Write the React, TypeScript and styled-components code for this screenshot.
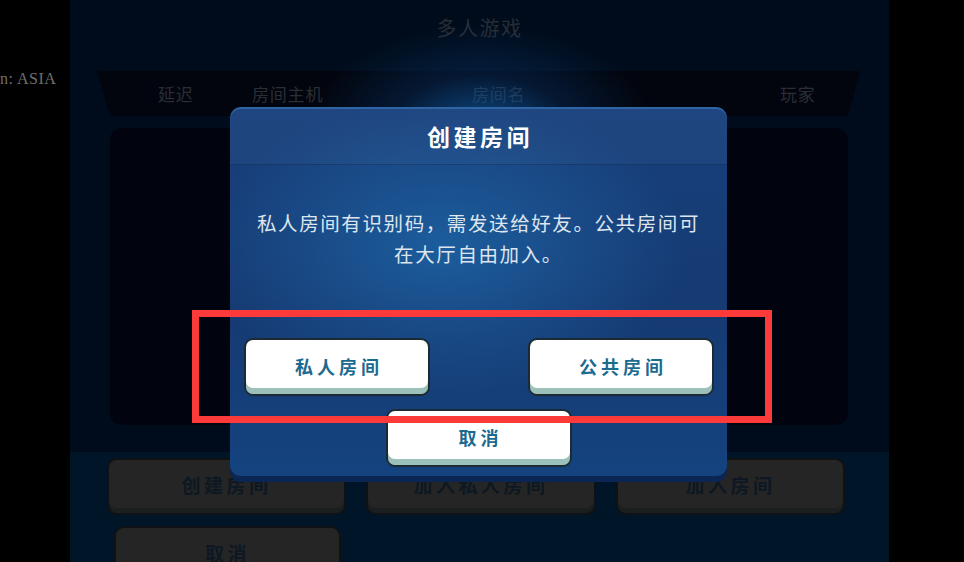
import styled, { createGlobalStyle } from "styled-components";

const GlobalStyle = createGlobalStyle`
  html, body {
    margin: 0;
    padding: 0;
    background: #000;
    overflow: hidden;
  }
  body {
    font-family: "Noto Sans CJK SC", "Noto Sans", sans-serif;
  }
`;

const cjk = `"Noto Sans CJK SC", "Noto Sans", sans-serif`;

const Screen = styled.div`
  position: relative;
  width: 964px;
  height: 562px;
  display: flex;
  background: #000;
  overflow: hidden;
`;

const Gutter = styled.div`
  width: 70px;
  flex: none;
  padding-top: 70px;
  overflow: hidden;
`;

const RegionLabel = styled.div`
  font-family: "Liberation Serif", serif;
  font-size: 16px;
  color: #6f6f6f;
  white-space: nowrap;
  letter-spacing: 0.5px;
`;

/* ---------- lobby panel (dimmed behind the popup) ---------- */

const Panel = styled.div`
  width: 819px;
  flex: none;
  display: flex;
  flex-direction: column;
  background: #000c1b;
  overflow: hidden;

  & > * {
    flex-shrink: 0;
  }
`;

const LobbyTitle = styled.div`
  height: 54px;
  display: flex;
  align-items: center;
  justify-content: center;
  font-family: ${cjk};
  font-size: 20px;
  letter-spacing: 1.5px;
  color: #272d36;
  margin-bottom: 17px;
`;

const HeaderBand = styled.div`
  height: 45px;
  margin: 0 29px 0 27px;
  background: #02050e;
  clip-path: polygon(0 0, 100% 0, calc(100% - 12px) 100%, 13px 100%);
  display: grid;
  grid-template-columns: 94px 220px 308px auto;
  align-items: center;
  padding-left: 61px;
  font-family: ${cjk};
  font-size: 17px;
  letter-spacing: 0.8px;
  color: #2a2e35;
`;

const ListArea = styled.div`
  height: 297px;
  margin: 12px 41px 0 40px;
  border-radius: 12px;
  background: #01040e;
`;

const Footer = styled.div`
  margin-top: 27px;
  flex: 1;
  background: #001527;
  padding-top: 6px;
  display: flex;
  flex-direction: column;
  gap: 11px;
`;

const FooterRow = styled.div<{ $indent: number }>`
  display: flex;
  gap: 20px;
  padding-left: ${(p) => p.$indent}px;
`;

const DimButton = styled.div<{ $w: number }>`
  width: ${(p) => p.$w}px;
  height: 57px;
  flex: none;
  box-sizing: border-box;
  border: 2px solid #0e1215;
  border-radius: 10px;
  background: #252525;
  box-shadow: inset 0 -5px 0 #1b1f1f;
  display: flex;
  align-items: center;
  justify-content: center;
  padding-bottom: 4px;
  font-family: ${cjk};
  font-weight: 700;
  font-size: 19px;
  letter-spacing: 3.5px;
  color: #0d1822;
`;

/* ---------- create-room popup ---------- */

const Glow = styled.div`
  position: absolute;
  left: 300px;
  top: 20px;
  width: 360px;
  height: 200px;
  background: radial-gradient(
    ellipse at 50% 55%,
    rgba(18, 100, 175, 0.75) 0%,
    rgba(10, 60, 120, 0.35) 35%,
    rgba(0, 20, 50, 0) 68%
  );
  pointer-events: none;
`;

const Dialog = styled.div`
  position: absolute;
  left: 230px;
  top: 107px;
  width: 497px;
  height: 369px;
  box-sizing: border-box;
  border-radius: 11px;
  background:
    radial-gradient(ellipse 240px 150px at 43% 38%, rgba(30, 104, 170, 0.75), rgba(30, 104, 170, 0) 100%),
    linear-gradient(180deg, #18407c 0%, #163a72 55%, #14437f 100%);
  box-shadow:
    0 6px 0 #0c2654,
    inset 0 2px 0 #2960a2;
  display: flex;
  flex-direction: column;
  align-items: center;
  overflow: hidden;
`;

const DialogHead = styled.div`
  align-self: stretch;
  height: 57px;
  display: flex;
  align-items: center;
  justify-content: center;
  background: rgba(255, 255, 255, 0.03);
  border-bottom: 1px solid rgba(8, 30, 70, 0.35);
  font-family: ${cjk};
  font-weight: 700;
  font-size: 23px;
  letter-spacing: 3.5px;
  color: #ffffff;
  padding-left: 3px;
`;

const Message = styled.p`
  margin: 42px 0 0;
  text-align: center;
  font-family: ${cjk};
  font-size: 19.5px;
  line-height: 31px;
  letter-spacing: 1.6px;
  color: #dde6ef;
`;

const ChoiceRow = styled.div`
  align-self: stretch;
  display: flex;
  justify-content: space-between;
  padding: 0 13px 0 14px;
  margin-top: 69px;
`;

const LightButton = styled.div`
  width: 186px;
  height: 58px;
  box-sizing: border-box;
  border: 2px solid #1b2a33;
  border-radius: 9px;
  background: #ffffff;
  box-shadow: inset 0 -6px 0 #9bc1ba;
  display: flex;
  align-items: center;
  justify-content: center;
  padding: 0 0 3px 4px;
  font-family: ${cjk};
  font-weight: 700;
  font-size: 18px;
  letter-spacing: 4px;
  color: #1b6a90;
`;

const CancelSlot = styled.div`
  margin-top: 13px;
`;

const HighlightFrame = styled.div`
  position: absolute;
  left: 192px;
  top: 310px;
  width: 580px;
  height: 113px;
  box-sizing: border-box;
  border: 7px solid #fd3a3a;
  pointer-events: none;
`;

const headers = ["延迟", "房间主机", "房间名", "玩家"];

export default function App() {
  return (
    <>
      <GlobalStyle />
      <Screen>
        <Gutter>
          <RegionLabel>n: ASIA</RegionLabel>
        </Gutter>
        <Panel>
          <LobbyTitle>多人游戏</LobbyTitle>
          <HeaderBand>
            {headers.map((h) => (
              <span key={h}>{h}</span>
            ))}
          </HeaderBand>
          <ListArea />
          <Footer>
            <FooterRow $indent={37}>
              <DimButton $w={239}>创建房间</DimButton>
              <DimButton $w={230}>加入私人房间</DimButton>
              <DimButton $w={229}>加入房间</DimButton>
            </FooterRow>
            <FooterRow $indent={44}>
              <DimButton $w={227}>取消</DimButton>
            </FooterRow>
          </Footer>
        </Panel>

        <Glow />
        <Dialog>
          <DialogHead>创建房间</DialogHead>
          <Message>
            私人房间有识别码，需发送给好友。公共房间可
            <br />
            在大厅自由加入。
          </Message>
          <ChoiceRow>
            <LightButton>私人房间</LightButton>
            <LightButton>公共房间</LightButton>
          </ChoiceRow>
          <CancelSlot>
            <LightButton>取消</LightButton>
          </CancelSlot>
        </Dialog>
        <HighlightFrame />
      </Screen>
    </>
  );
}
